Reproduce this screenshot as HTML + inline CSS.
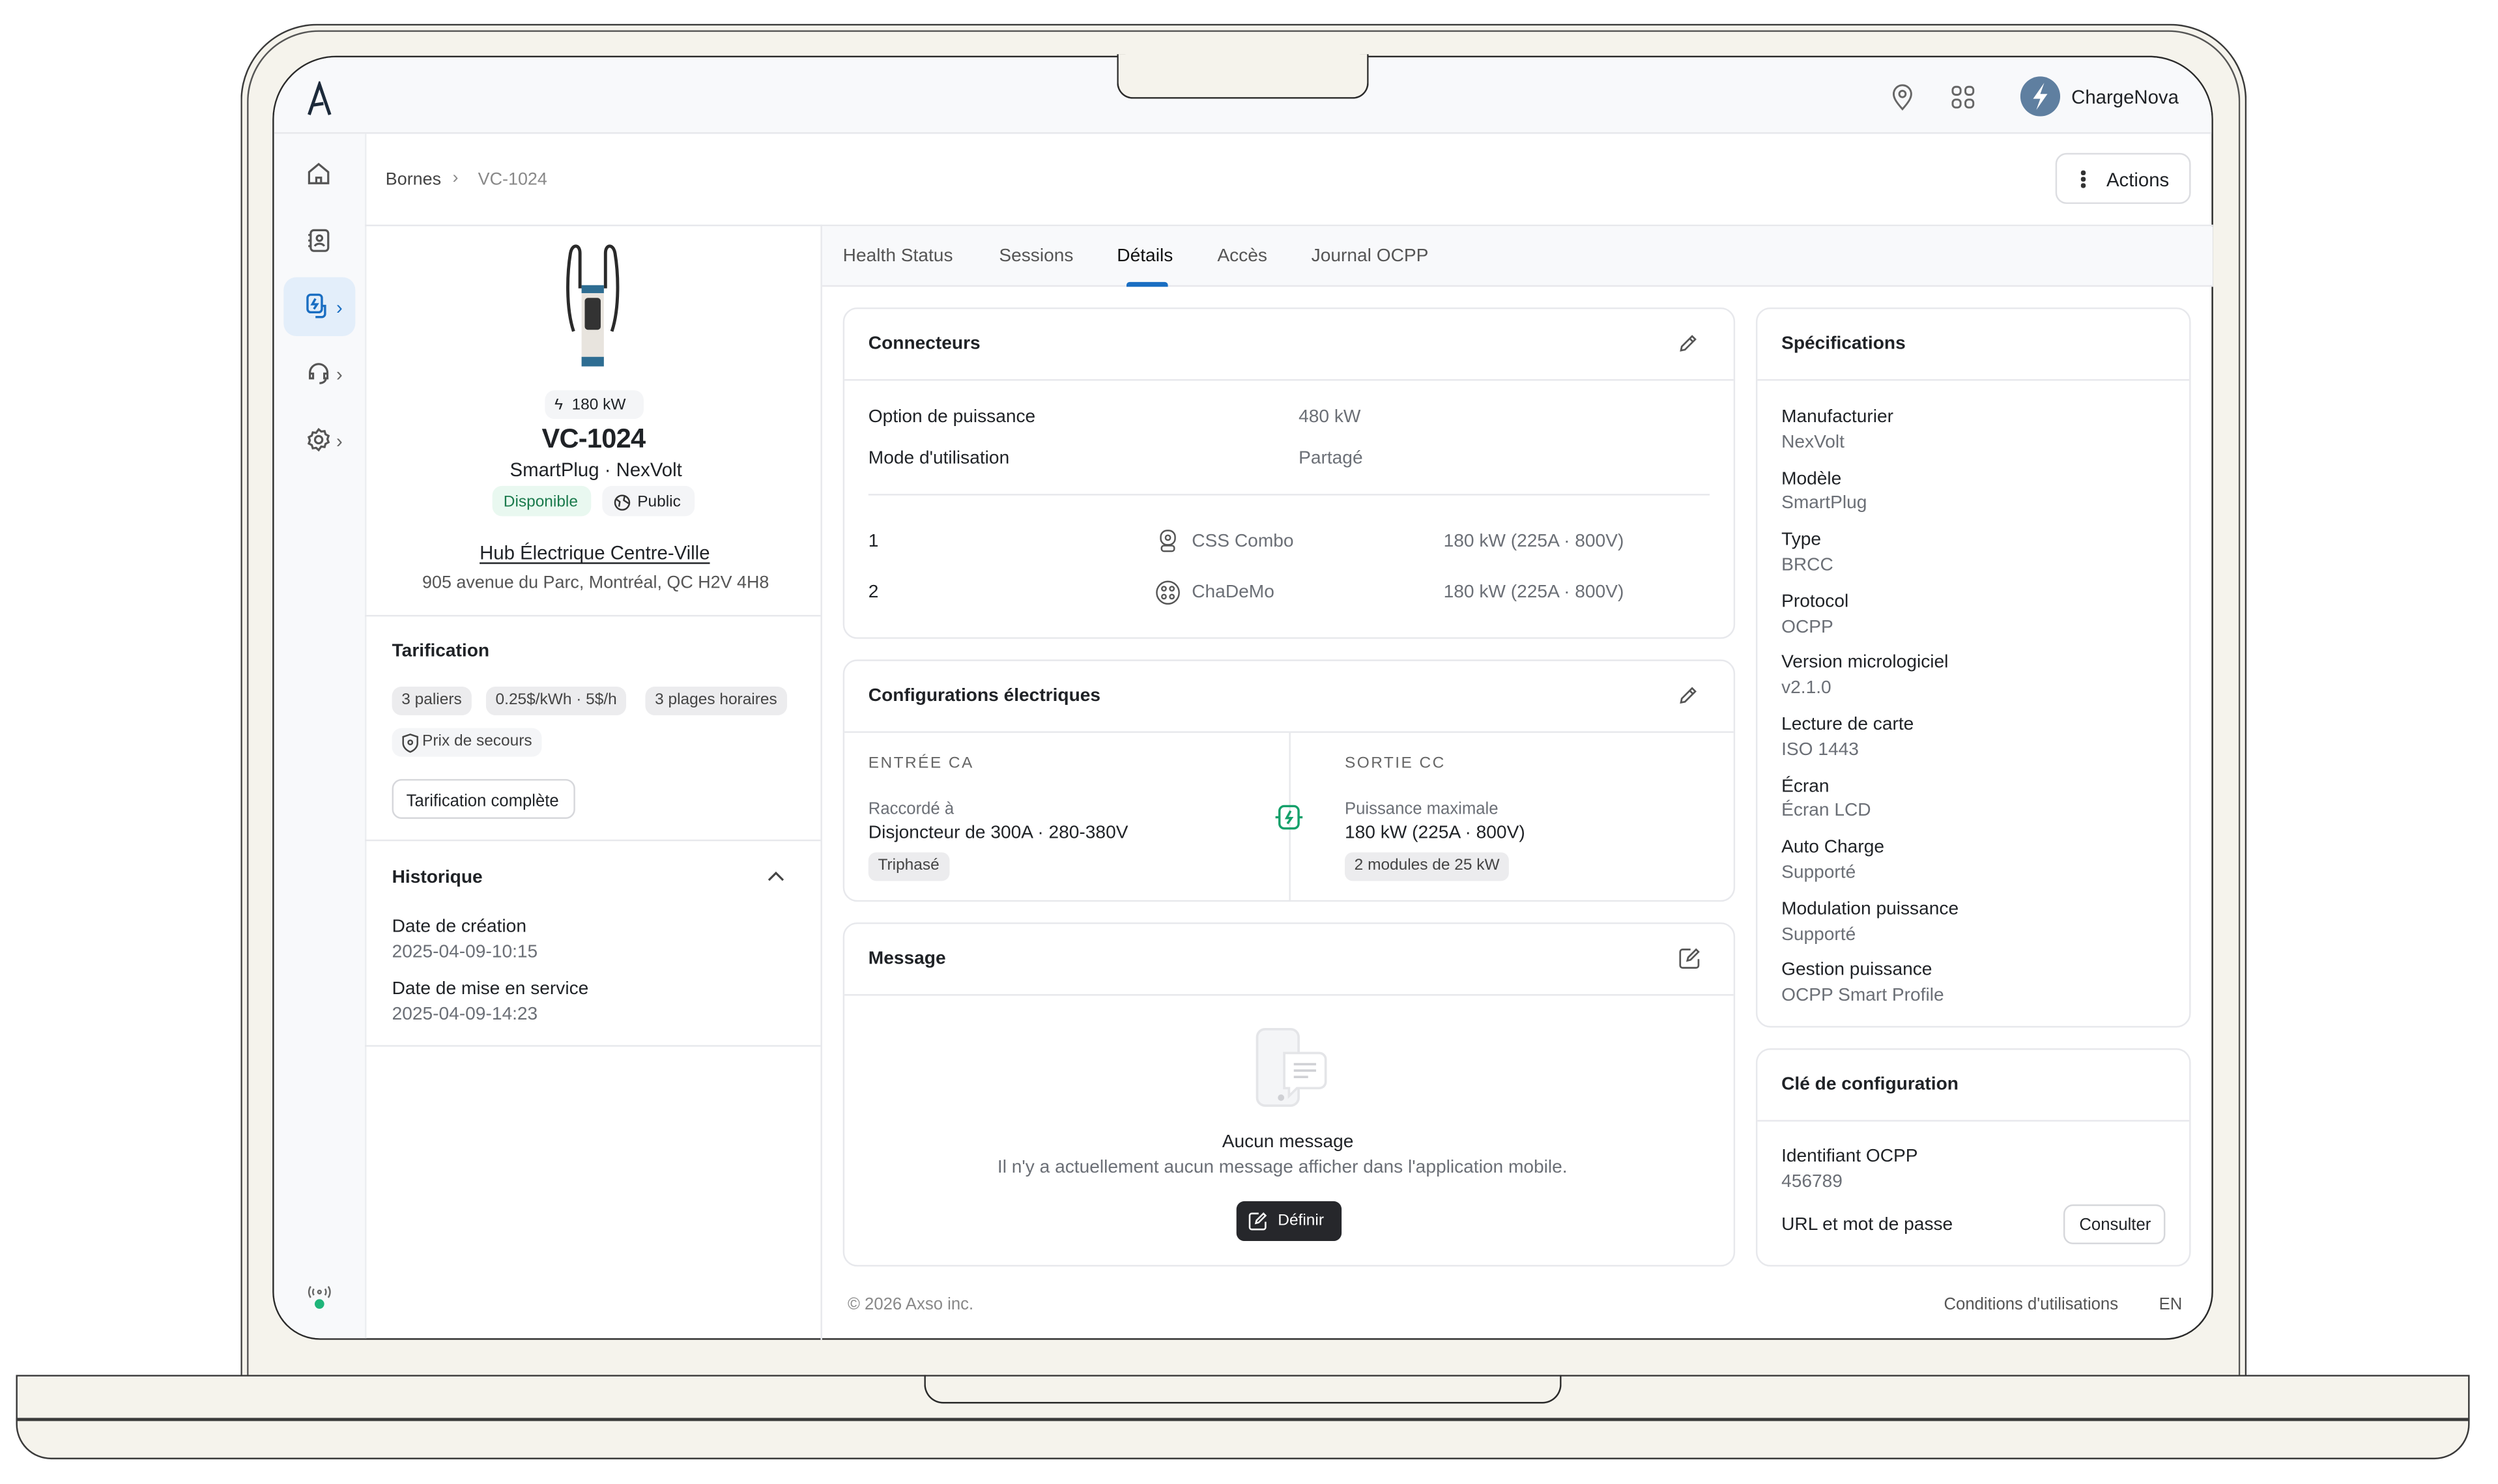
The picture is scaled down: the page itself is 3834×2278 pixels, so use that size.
<!DOCTYPE html>
<html><head><meta charset="utf-8"><style>
*{box-sizing:border-box;margin:0;padding:0}
html,body{width:3834px;height:2278px;overflow:hidden;background:#fff}
#w{position:absolute;left:0;top:0;width:1560px;height:927px;transform:scale(2.4455);transform-origin:0 0;font-family:"Liberation Sans",sans-serif;color:#1f2226;font-size:11.5px}
.a{position:absolute}
.t{position:absolute;white-space:nowrap;line-height:1;margin-top:1px}
.g{color:#6b6f76}
.card{position:absolute;border:1px solid #e7e8ec;border-radius:9px;background:#fff}
.hd{position:absolute;left:0;right:0;border-bottom:1px solid #e7e8ec}
.chip{position:absolute;background:#ececee;border-radius:6px;font-size:10px;color:#444;line-height:18px;padding:0 6px;white-space:nowrap}
svg{position:absolute}
</style></head><body><div id="w">
<div class="a" style="left:151px;top:15px;width:1259px;height:860px;background:#f5f3ec;border:1.5px solid #3a3a3a;border-bottom:none;border-radius:48px 48px 0 0"></div>
<div class="a" style="left:155px;top:19px;width:1251px;height:856px;border:1px solid #555;border-bottom:none;border-radius:45px 45px 0 0"></div>
<div class="a" style="left:171px;top:35px;width:1218px;height:806px;background:#fff;border:1.5px solid #2a2a2a;border-radius:40px 40px 30px 30px;overflow:hidden">
 <div class="a" style="left:0;top:0;width:1218px;height:48px;background:#f8f9fb;border-bottom:1px solid #e7e8ec"></div>
 <div class="a" style="left:0;top:48px;width:58px;height:760px;background:#f8f9fb;border-right:1px solid #eceef1"></div>
</div>
<div class="a" style="left:701px;top:34px;width:158px;height:28px;background:#f5f3ec;border:1.5px solid #2a2a2a;border-top:none;border-radius:0 0 10px 10px"></div>
<svg style="left:192px;top:51px" width="18" height="22" viewBox="0 0 18 22"><path d="M2 21 L8.5 2 L15 21 M4 15 L11 14" fill="none" stroke="#1c2a3a" stroke-width="2"/></svg>
<svg style="left:1186px;top:52px" width="16" height="18" viewBox="0 0 16 18"><path d="M8 16.5C4 12 2.5 9.5 2.5 7a5.5 5.5 0 0111 0c0 2.5-1.5 5-5.5 9.5z" fill="none" stroke="#666" stroke-width="1.2"/><circle cx="8" cy="7" r="2" fill="none" stroke="#666" stroke-width="1.2"/></svg>
<svg style="left:1224px;top:53px" width="16" height="16" viewBox="0 0 16 16" fill="none" stroke="#666" stroke-width="1.2"><rect x="1.5" y="1.5" width="5" height="5" rx="2"/><rect x="9.5" y="1.5" width="5" height="5" rx="2"/><rect x="1.5" y="9.5" width="5" height="5" rx="2"/><rect x="9.5" y="9.5" width="5" height="5" rx="2"/></svg>
<div class="a" style="left:1268px;top:48px;width:25px;height:25px;border-radius:50%;background:#5f7fa0"></div>
<svg style="left:1272px;top:51px" width="17" height="19" viewBox="0 0 17 19"><path d="M11 1 L4 11 H8.5 L6 18 L13 8 H8.5 Z" fill="#fff"/></svg>
<div class="t" style="left:1300px;top:54px;font-size:12px">ChargeNova</div>
<svg style="left:192px;top:101px" width="16" height="16" viewBox="0 0 16 16" fill="none" stroke="#555" stroke-width="1.3"><path d="M2 7 L8 2 L14 7 V14 H2 Z M6.5 14 V10.5 H9.5 V14"/></svg>
<svg style="left:192px;top:143px" width="16" height="16" viewBox="0 0 16 16" fill="none" stroke="#555" stroke-width="1.3"><rect x="3" y="1.5" width="11" height="13" rx="2"/><circle cx="8.5" cy="6.5" r="1.7"/><path d="M5.5 11.5c1-2 5-2 6 0M1.5 4.5h2M1.5 8h2M1.5 11.5h2"/></svg>
<div class="a" style="left:178px;top:174px;width:45px;height:37px;background:#e3eefa;border-radius:8px"></div>
<svg style="left:192px;top:184px" width="14" height="17" viewBox="0 0 14 17" fill="none" stroke="#1a6ec2" stroke-width="1.4"><rect x="1" y="1" width="9" height="11" rx="2"/><path d="M6 3.5 L4 7 H7 L5 10 M10 8 h2 v5 a2 2 0 01-2 2 H6"/></svg>
<div class="t" style="left:211px;top:186px;color:#1a6ec2;font-size:12px">›</div>
<svg style="left:192px;top:226px" width="16" height="16" viewBox="0 0 16 16" fill="none" stroke="#555" stroke-width="1.3"><path d="M2.5 10V8a5.5 5.5 0 0111 0v2M2.5 8.5h2v3h-2zM11.5 8.5h2v3h-2zM12.5 11.5c0 2-2 3-4 3"/></svg>
<div class="t" style="left:211px;top:228px;color:#666;font-size:12px">›</div>
<svg style="left:192px;top:268px" width="16" height="16" viewBox="0 0 16 16" fill="none" stroke="#555" stroke-width="1.3"><circle cx="8" cy="8" r="2.3"/><path d="M8 1.5l1.6 1.4 2.1-.3.6 2 1.9 1-.7 2 .7 2-1.9 1-.6 2-2.1-.3L8 14.5l-1.6-1.4-2.1.3-.6-2-1.9-1 .7-2-.7-2 1.9-1 .6-2 2.1.3z"/></svg>
<div class="t" style="left:211px;top:270px;color:#666;font-size:12px">›</div>
<svg style="left:192px;top:805px" width="17" height="18" viewBox="0 0 17 18" fill="none" stroke="#666" stroke-width="1"><path d="M3 2.5a6 6 0 000 7M14 2.5a6 6 0 010 7M5 4a3.5 3.5 0 000 4M12 4a3.5 3.5 0 010 4"/><circle cx="8.5" cy="6" r="1"/><circle cx="8.5" cy="13.5" r="3" fill="#1fb57a" stroke="none"/></svg>
<div class="a" style="left:229px;top:141px;width:1160px;height:1px;background:#e7e8ec"></div>
<div class="t" style="left:242px;top:107px;font-size:11px;color:#444">Bornes</div>
<div class="t" style="left:284px;top:106px;font-size:11px;color:#888">›</div>
<div class="t" style="left:300px;top:107px;font-size:11px;color:#888">VC-1024</div>
<div class="a" style="left:1290px;top:96px;width:85px;height:32px;border:1px solid #dcdde1;border-radius:7px"></div>
<div class="a" style="left:1306px;top:107px;width:2.5px;height:2.5px;border-radius:50%;background:#333;box-shadow:0 4px #333,0 8px #333"></div>
<div class="t" style="left:1322px;top:106px;font-size:12px">Actions</div>
<div class="a" style="left:515px;top:141px;width:1px;height:700px;background:#e7e8ec"></div>
<svg style="left:352px;top:153px" width="40" height="80" viewBox="0 0 40 80"><path d="M8 55 C3 40 4 18 6 6 C7 0 12 0 12 6 L12 28 M32 55 C37 40 36 18 34 6 C33 0 28 0 28 6 L28 28" fill="none" stroke="#2a2a2a" stroke-width="2"/><rect x="13" y="26" width="14" height="50" rx="3" fill="#e8e4de"/><rect x="13" y="26" width="14" height="5" fill="#2e6d92"/><rect x="13" y="71" width="14" height="6" fill="#2e6d92"/><rect x="15" y="34" width="10" height="20" rx="2" fill="#333"/></svg>
<div class="a" style="left:342px;top:245px;width:62px;height:18px;background:#f4f5f7;border-radius:6px"></div>
<div class="t" style="left:348px;top:249px;font-size:10px">ϟ&nbsp; 180 kW</div>
<div class="t" style="left:340px;top:266px;font-size:17px;font-weight:bold;letter-spacing:-.3px">VC-1024</div>
<div class="t" style="left:320px;top:288px;font-size:12px">SmartPlug · NexVolt</div>
<div class="a" style="left:309px;top:305px;width:62px;height:19px;background:#e9f8f0;border-radius:6px"></div>
<div class="t" style="left:316px;top:310px;font-size:10px;color:#1a7a4c">Disponible</div>
<div class="a" style="left:378px;top:305px;width:58px;height:19px;background:#f4f5f7;border-radius:6px"></div>
<svg style="left:385px;top:310px" width="11" height="11" viewBox="0 0 11 11" fill="none" stroke="#333" stroke-width="1"><circle cx="5.5" cy="5.5" r="4.5"/><path d="M2 3.5 L4 5 L3.5 8 M7 1.5 L6.5 4 L9.5 6"/></svg>
<div class="t" style="left:400px;top:310px;font-size:10px">Public</div>
<div class="t" style="left:301px;top:340px;font-size:12px;text-decoration:underline;text-underline-offset:2px">Hub Électrique Centre-Ville</div>
<div class="t" style="left:265px;top:360px;font-size:11px;color:#555">905 avenue du Parc, Montréal, QC H2V 4H8</div>
<div class="a" style="left:229px;top:386px;width:286px;height:1px;background:#e7e8ec"></div>
<div class="t" style="left:246px;top:403px;font-size:11.5px;font-weight:bold">Tarification</div>
<div class="chip" style="left:246px;top:431px">3 paliers</div>
<div class="chip" style="left:305px;top:431px">0.25$/kWh · 5$/h</div>
<div class="chip" style="left:405px;top:431px">3 plages horaires</div>
<div class="chip" style="left:246px;top:457px;background:#f4f5f7"><span style="display:inline-block;width:13px"></span>Prix de secours</div>
<svg style="left:252px;top:460px" width="11" height="13" viewBox="0 0 11 13" fill="none" stroke="#444" stroke-width="1"><path d="M5.5 1 L10 2.5 V6.5 C10 9 8 11 5.5 12 C3 11 1 9 1 6.5 V2.5 Z"/><circle cx="5.5" cy="6" r="1.3"/></svg>
<div class="a" style="left:246px;top:489px;width:115px;height:25px;border:1px solid #d6d7db;border-radius:6px"></div>
<div class="t" style="left:255px;top:497px;font-size:10.5px">Tarification complète</div>
<div class="a" style="left:229px;top:527px;width:286px;height:1px;background:#e7e8ec"></div>
<div class="t" style="left:246px;top:545px;font-size:11.5px;font-weight:bold">Historique</div>
<svg style="left:481px;top:546px" width="12" height="8" viewBox="0 0 12 8"><path d="M1.5 6.5 L6 2 L10.5 6.5" fill="none" stroke="#444" stroke-width="1.3"/></svg>
<div class="t" style="left:246px;top:576px;font-size:11.5px">Date de création</div>
<div class="t g" style="left:246px;top:592px;font-size:11.5px">2025-04-09-10:15</div>
<div class="t" style="left:246px;top:615px;font-size:11.5px">Date de mise en service</div>
<div class="t g" style="left:246px;top:631px;font-size:11.5px">2025-04-09-14:23</div>
<div class="a" style="left:229px;top:656px;width:286px;height:1px;background:#e7e8ec"></div>
<div class="a" style="left:516px;top:142px;width:873px;height:38px;background:#f8f9fb;border-bottom:1px solid #e7e8ec"></div>
<div class="t" style="left:529px;top:155px;font-size:11.5px;color:#555">Health Status</div>
<div class="t" style="left:627px;top:155px;font-size:11.5px;color:#555">Sessions</div>
<div class="t" style="left:701px;top:155px;font-size:11.5px;color:#111">Détails</div>
<div class="a" style="left:707px;top:177px;width:26px;height:3px;background:#1a6ec2;border-radius:2px 2px 0 0"></div>
<div class="t" style="left:764px;top:155px;font-size:11.5px;color:#555">Accès</div>
<div class="t" style="left:823px;top:155px;font-size:11.5px;color:#555">Journal OCPP</div>
<div class="card" style="left:529px;top:193px;width:560px;height:208px"><div class="hd" style="top:0;height:45px"></div></div>
<div class="t" style="left:545px;top:210px;font-size:11.5px;font-weight:bold">Connecteurs</div>
<svg style="left:1053px;top:209px" width="13" height="13" viewBox="0 0 13 13" fill="none" stroke="#555" stroke-width="1.1"><path d="M2 11 L2.5 8.5 L9 2 L11 4 L4.5 10.5 Z M7.5 3.5 L9.5 5.5"/></svg>
<div class="t" style="left:545px;top:256px">Option de puissance</div>
<div class="t g" style="left:815px;top:256px">480 kW</div>
<div class="t" style="left:545px;top:282px">Mode d'utilisation</div>
<div class="t g" style="left:815px;top:282px">Partagé</div>
<div class="a" style="left:545px;top:310px;width:528px;height:1px;background:#e7e8ec"></div>
<div class="t" style="left:545px;top:334px">1</div>
<svg style="left:726px;top:332px" width="14" height="15" viewBox="0 0 14 15" fill="none" stroke="#555" stroke-width="1"><rect x="2.5" y="1" width="9" height="9" rx="4"/><circle cx="7" cy="5.5" r="1.5"/><rect x="3" y="10.5" width="8" height="3.5" rx="1.5"/></svg>
<div class="t g" style="left:748px;top:334px">CSS Combo</div>
<div class="t g" style="left:906px;top:334px">180 kW (225A · 800V)</div>
<div class="t" style="left:545px;top:366px">2</div>
<svg style="left:725px;top:364px" width="16" height="16" viewBox="0 0 16 16" fill="none" stroke="#555" stroke-width="1"><circle cx="8" cy="8" r="7"/><circle cx="5.5" cy="5.5" r="1.3"/><circle cx="10.5" cy="5.5" r="1.3"/><circle cx="5.5" cy="10.5" r="1.3"/><circle cx="10.5" cy="10.5" r="1.3"/></svg>
<div class="t g" style="left:748px;top:366px">ChaDeMo</div>
<div class="t g" style="left:906px;top:366px">180 kW (225A · 800V)</div>
<div class="card" style="left:529px;top:414px;width:560px;height:152px"><div class="hd" style="top:0;height:45px"></div><div class="a" style="left:279px;top:45px;width:1px;height:106px;background:#e7e8ec"></div></div>
<div class="t" style="left:545px;top:431px;font-size:11.5px;font-weight:bold">Configurations électriques</div>
<svg style="left:1053px;top:430px" width="13" height="13" viewBox="0 0 13 13" fill="none" stroke="#555" stroke-width="1.1"><path d="M2 11 L2.5 8.5 L9 2 L11 4 L4.5 10.5 Z M7.5 3.5 L9.5 5.5"/></svg>
<div class="t" style="left:545px;top:474px;font-size:10px;color:#666;letter-spacing:1px">ENTRÉE CA</div>
<div class="t g" style="left:545px;top:502px;font-size:10.5px">Raccordé à</div>
<div class="t" style="left:545px;top:517px;font-size:11.5px">Disjoncteur de 300A · 280-380V</div>
<div class="chip" style="left:545px;top:535px;border-radius:5px;height:18px">Triphasé</div>
<svg style="left:799px;top:503px" width="20" height="20" viewBox="0 0 20 20" fill="none" stroke="#14a06a" stroke-width="1.4"><rect x="4" y="3" width="12" height="14" rx="3"/><path d="M11 6 L8.5 10.5 H11.5 L9 14 M1.5 10h2.5M16 10h2.5"/></svg>
<div class="t" style="left:844px;top:474px;font-size:10px;color:#666;letter-spacing:1px">SORTIE CC</div>
<div class="t g" style="left:844px;top:502px;font-size:10.5px">Puissance maximale</div>
<div class="t" style="left:844px;top:517px;font-size:11.5px">180 kW (225A · 800V)</div>
<div class="chip" style="left:844px;top:535px;border-radius:5px;height:18px">2 modules de 25 kW</div>
<div class="card" style="left:529px;top:579px;width:560px;height:216px"><div class="hd" style="top:0;height:45px"></div></div>
<div class="t" style="left:545px;top:596px;font-size:11.5px;font-weight:bold">Message</div>
<svg style="left:1053px;top:594px" width="15" height="15" viewBox="0 0 15 15" fill="none" stroke="#555" stroke-width="1.1"><path d="M8 2 H3 a1.5 1.5 0 00-1.5 1.5 V12 a1.5 1.5 0 001.5 1.5 H11.5 a1.5 1.5 0 001.5-1.5 V8 M6 9 L6.5 7 L11.5 2 L13 3.5 L8 8.5 Z"/></svg>
<svg style="left:786px;top:645px" width="50" height="52" viewBox="0 0 50 52"><rect x="3" y="1" width="26" height="48" rx="5" fill="#f4f5f7" stroke="#e4e5e8" stroke-width="1.5"/><path d="M20 16 h22 a4 4 0 014 4 v14 a4 4 0 01-4 4 H28 l-5 5 v-5 h-3 z" fill="#fff" stroke="#e4e5e8" stroke-width="1.5"/><path d="M26 23h14M26 27h14M26 31h9" stroke="#d0d1d5" stroke-width="1.5"/><circle cx="18" cy="44" r="2" fill="#cfd0d4"/></svg>
<div class="t" style="left:767px;top:711px;font-size:11.5px">Aucun message</div>
<div class="t g" style="left:626px;top:727px;font-size:11.5px">Il n'y a actuellement aucun message afficher dans l'application mobile.</div>
<div class="a" style="left:776px;top:754px;width:66px;height:25px;background:#26272b;border-radius:5px"></div>
<svg style="left:783px;top:760px" width="13" height="13" viewBox="0 0 15 15" fill="none" stroke="#fff" stroke-width="1.2"><path d="M8 2 H3 a1.5 1.5 0 00-1.5 1.5 V12 a1.5 1.5 0 001.5 1.5 H11.5 a1.5 1.5 0 001.5-1.5 V8 M6 9 L6.5 7 L11.5 2 L13 3.5 L8 8.5 Z"/></svg>
<div class="t" style="left:802px;top:761px;font-size:10px;color:#fff">Définir</div>
<div class="card" style="left:1102px;top:193px;width:273px;height:452px"><div class="hd" style="top:0;height:45px"></div></div>
<div class="t" style="left:1118px;top:210px;font-size:11.5px;font-weight:bold">Spécifications</div>
<div class="a" style="left:1118px;top:255px;line-height:15.8px;font-size:11.5px;white-space:nowrap">
<div>Manufacturier</div><div class="g" style="margin-bottom:7px">NexVolt</div>
<div>Modèle</div><div class="g" style="margin-bottom:7px">SmartPlug</div>
<div>Type</div><div class="g" style="margin-bottom:7px">BRCC</div>
<div>Protocol</div><div class="g" style="margin-bottom:7px">OCPP</div>
<div>Version micrologiciel</div><div class="g" style="margin-bottom:7px">v2.1.0</div>
<div>Lecture de carte</div><div class="g" style="margin-bottom:7px">ISO 1443</div>
<div>Écran</div><div class="g" style="margin-bottom:7px">Écran LCD</div>
<div>Auto Charge</div><div class="g" style="margin-bottom:7px">Supporté</div>
<div>Modulation puissance</div><div class="g" style="margin-bottom:7px">Supporté</div>
<div>Gestion puissance</div><div class="g">OCPP Smart Profile</div>
</div>
<div class="card" style="left:1102px;top:658px;width:273px;height:137px"><div class="hd" style="top:0;height:45px"></div></div>
<div class="t" style="left:1118px;top:675px;font-size:11.5px;font-weight:bold">Clé de configuration</div>
<div class="t" style="left:1118px;top:720px">Identifiant OCPP</div>
<div class="t g" style="left:1118px;top:736px">456789</div>
<div class="t" style="left:1118px;top:763px">URL et mot de passe</div>
<div class="a" style="left:1295px;top:756px;width:64px;height:25px;border:1px solid #d6d7db;border-radius:6px"></div>
<div class="t" style="left:1305px;top:763px;font-size:10.5px">Consulter</div>
<div class="t" style="left:532px;top:813px;font-size:10.5px;color:#888">© 2026 Axso inc.</div>
<div class="t" style="left:1220px;top:813px;font-size:10.5px;color:#555">Conditions d'utilisations</div>
<div class="t" style="left:1355px;top:813px;font-size:10.5px;color:#555">EN</div>
<div class="a" style="left:10px;top:863px;width:1540px;height:53px;background:#f5f3ec;border:1.5px solid #3a3a3a;border-radius:0 0 22px 22px"></div>
<div class="a" style="left:10px;top:890px;width:1540px;height:1.5px;background:#3a3a3a"></div>
<div class="a" style="left:580px;top:863px;width:400px;height:18px;border:1.2px solid #2a2a2a;border-top:none;border-radius:0 0 12px 12px"></div>
</div></body></html>
